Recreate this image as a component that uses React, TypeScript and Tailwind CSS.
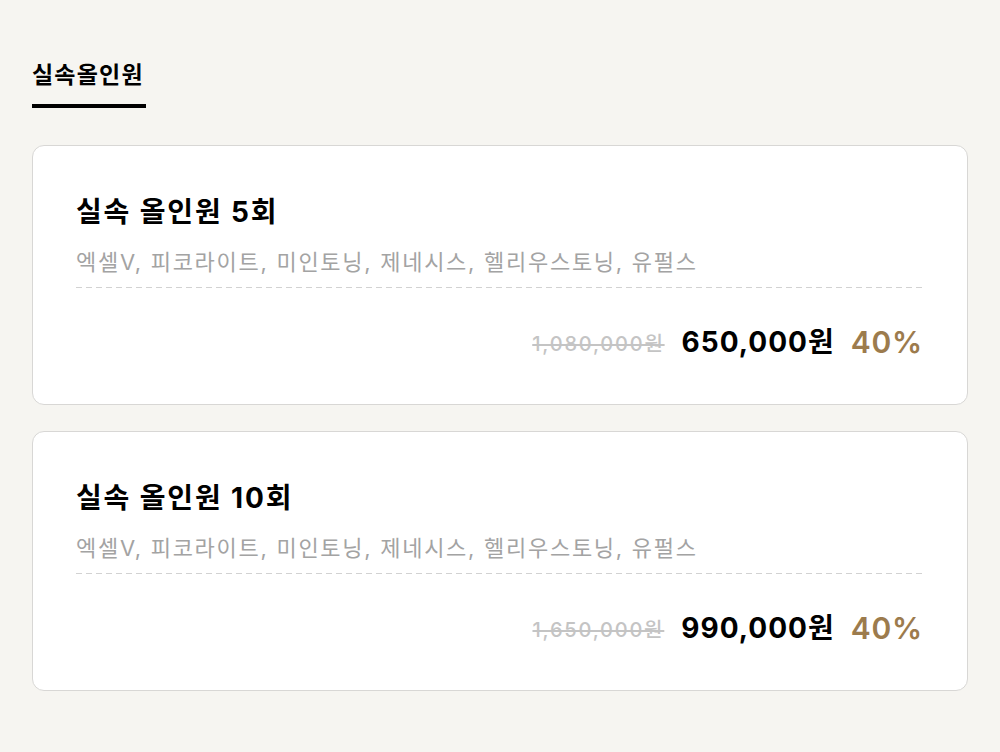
const font = { fontFamily: 'Inter, "Noto Sans CJK KR", sans-serif' };

interface Plan {
  id: number;
  title: string;
  items: string;
  original: string;
  price: string;
  discount: string;
}

const plans: Plan[] = [
  {
    id: 1,
    title: "실속 올인원 5회",
    items: "엑셀V, 피코라이트, 미인토닝, 제네시스, 헬리우스토닝, 유펄스",
    original: "1,080,000원",
    price: "650,000원",
    discount: "40%",
  },
  {
    id: 2,
    title: "실속 올인원 10회",
    items: "엑셀V, 피코라이트, 미인토닝, 제네시스, 헬리우스토닝, 유펄스",
    original: "1,650,000원",
    price: "990,000원",
    discount: "40%",
  },
];

function PlanCard({ plan }: { plan: Plan }) {
  return (
    <div className="rounded-[12px] border border-[#d8d7d5] bg-white px-[43px] pt-[47px] pb-[43px]">
      <h3 className="text-[28px] leading-[38px] font-bold text-black tracking-[1.85px]">{plan.title}</h3>
      <p className="mt-[16px] text-[22px] leading-[30px] text-[#a3a3a3] tracking-[1.72px]">{plan.items}</p>
      {/* dashed divider */}
      <div className="mt-[10px] h-px bg-[linear-gradient(to_right,#d2d2d2_6px,transparent_6px)] bg-[length:10px_1px]" />
      <div className="mt-[35px] flex h-[38px] items-center justify-end pr-[1px]">
        <span className="mt-[4px] text-[20px] text-[#c4c4c4] line-through font-medium tracking-[1.8px]">{plan.original}</span>
        <span className="ml-[17px] text-[28px] font-bold text-black tracking-[1px]">{plan.price}</span>
        <span className="ml-[16px] text-[30px] font-semibold text-[#9c7b4d] tracking-[0.8px]">{plan.discount}</span>
      </div>
    </div>
  );
}

export default function App() {
  return (
    <div className="min-h-[752px] bg-[#f6f5f1] px-8 pt-[59px]" style={font}>
      <div className="flex">
        <div className="border-b-4 border-black pb-[13px] pr-[2px] text-[23px] leading-[32px] font-bold text-black tracking-[1.2px]">
          실속올인원
        </div>
      </div>
      <div className="mt-[37px] flex flex-col gap-[26px]">
        {plans.map((plan) => (
          <PlanCard key={plan.id} plan={plan} />
        ))}
      </div>
    </div>
  );
}
